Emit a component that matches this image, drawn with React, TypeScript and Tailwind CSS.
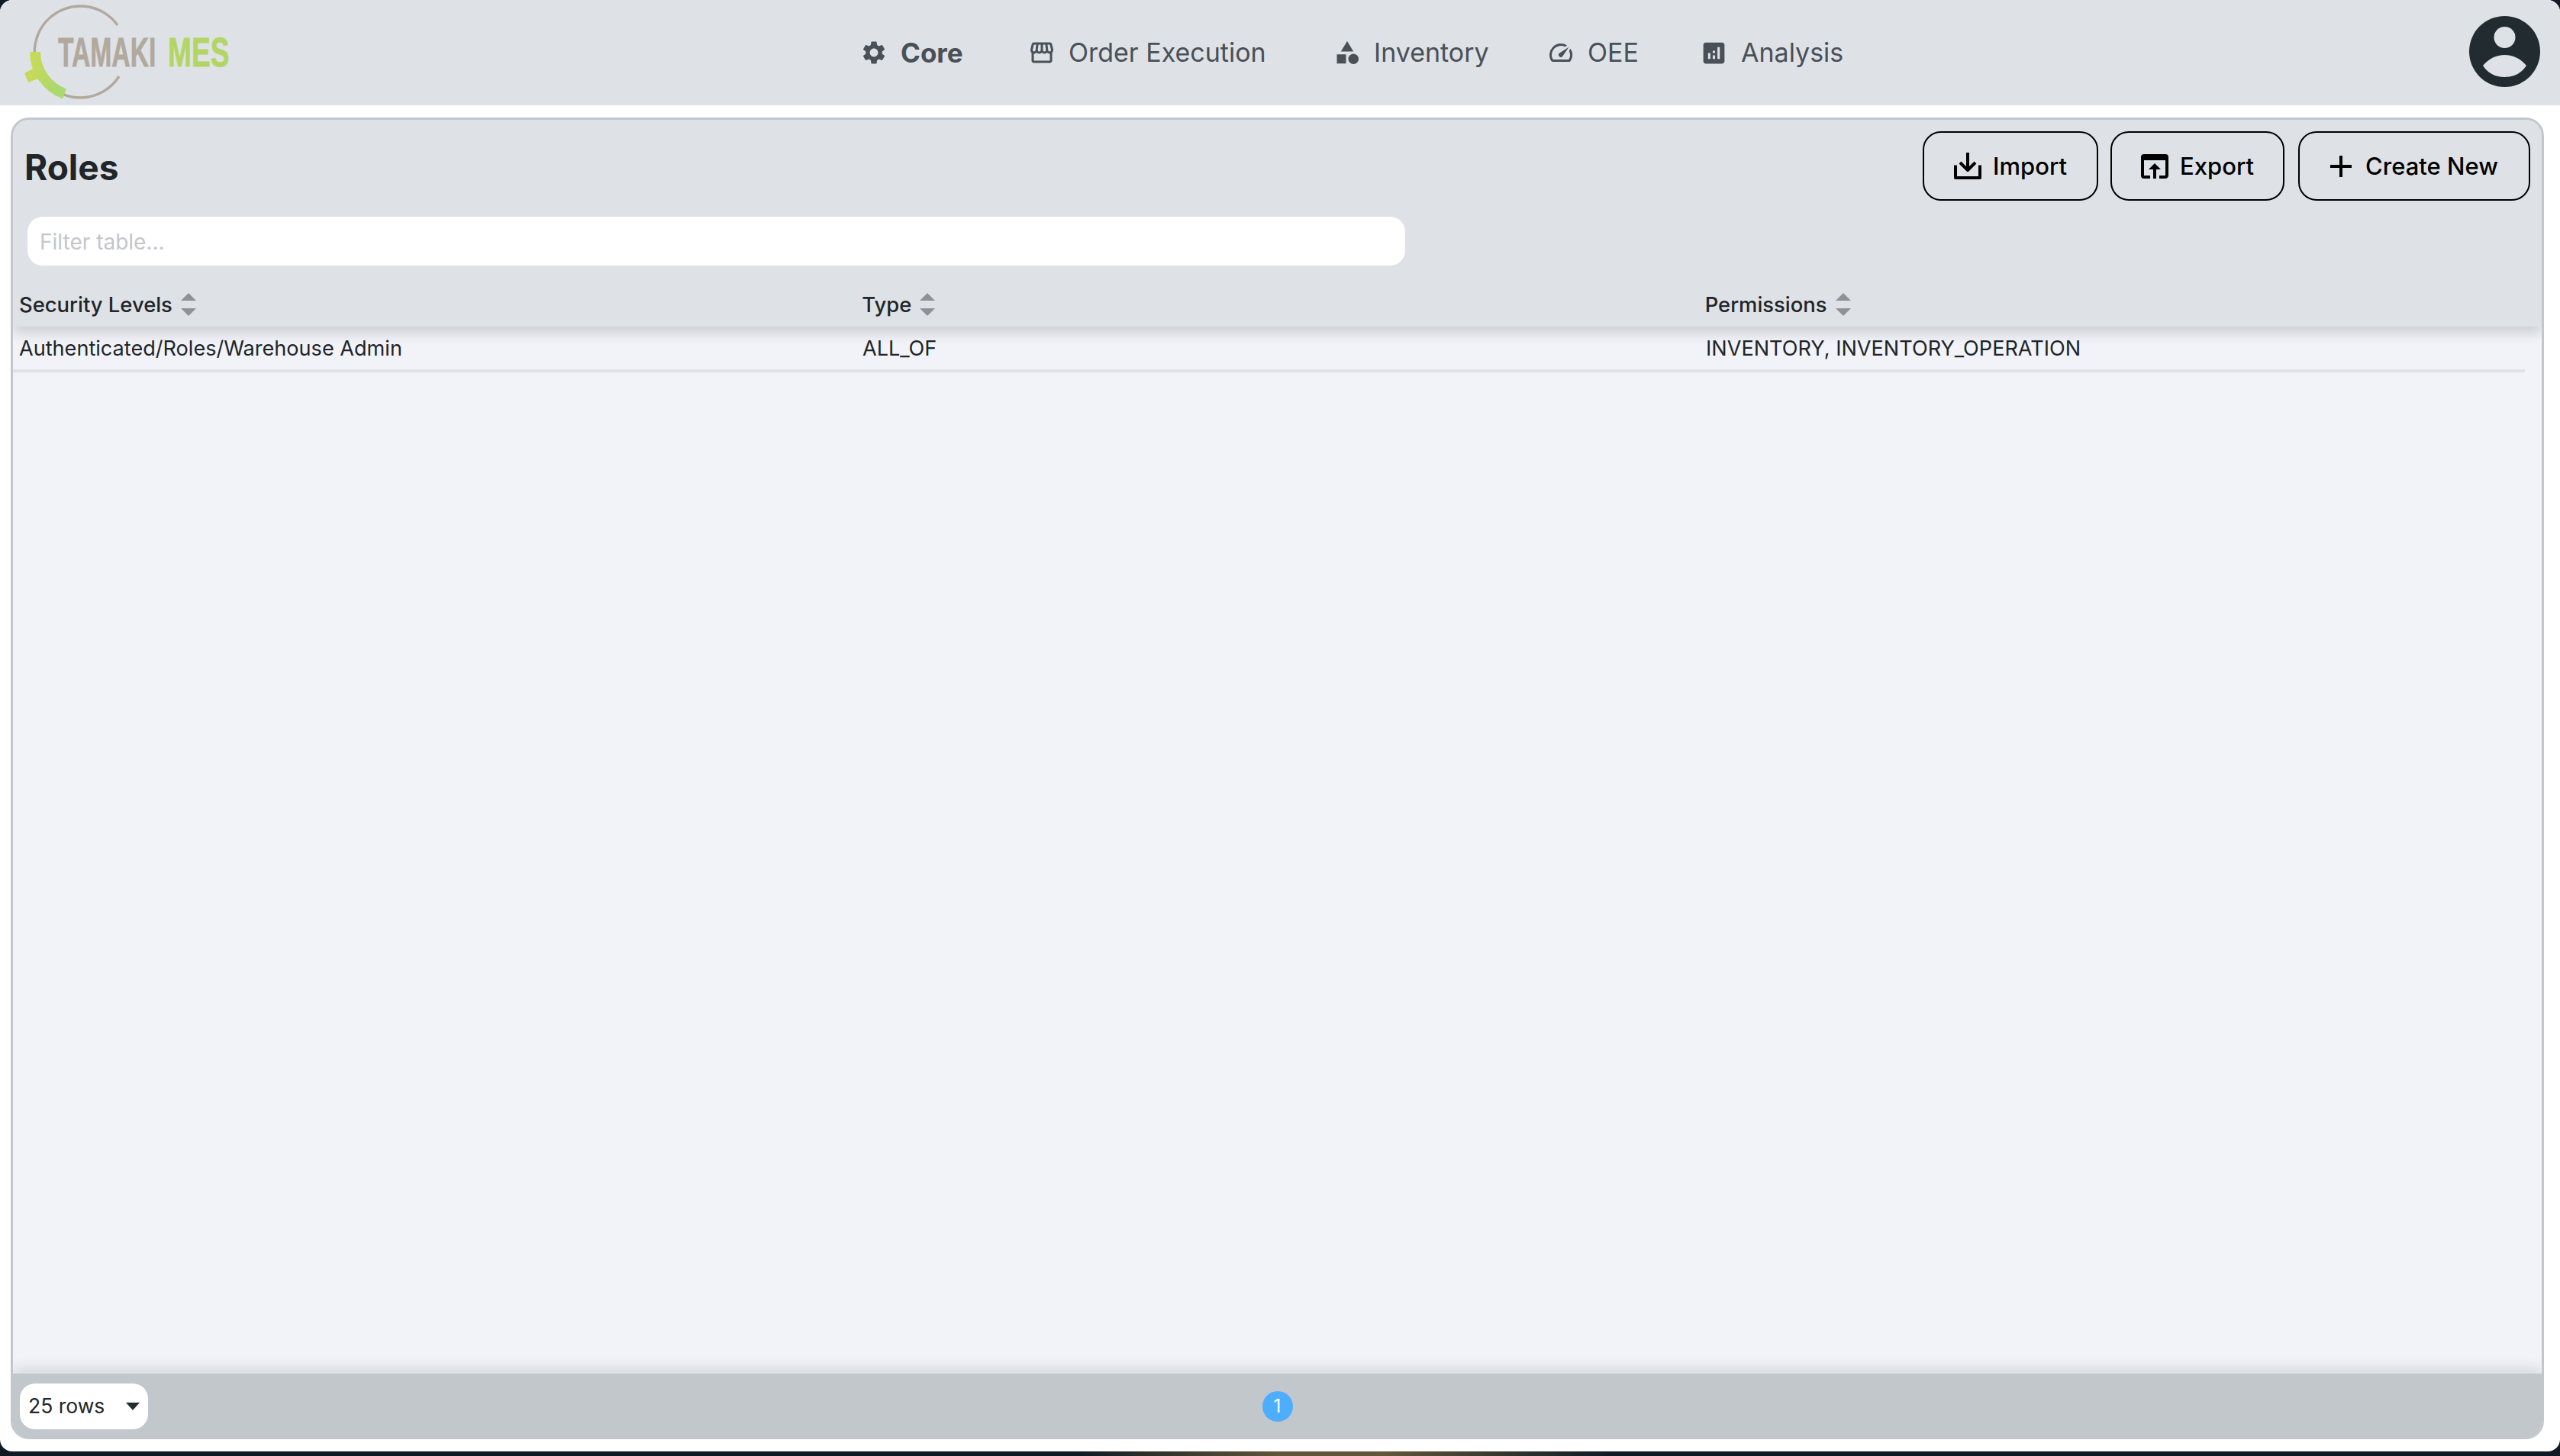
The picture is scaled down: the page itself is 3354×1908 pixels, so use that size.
import { MdSettings, MdOutlineStorefront, MdCategory, MdOutlineSpeed, MdAnalytics, MdOpenInBrowser, MdAdd } from "react-icons/md";

function Logo() {
  return (
    <svg width="320" height="138" viewBox="0 0 320 138" className="block">
      <defs>
        <linearGradient id="lg" x1="0" y1="0" x2="1" y2="0.4">
          <stop offset="0" stopColor="#c6da58" />
          <stop offset="1" stopColor="#a9d96f" />
        </linearGradient>
      </defs>
      <path d="M154 33 A60 60 0 1 0 156 100" fill="none" stroke="#b1a99d" strokeWidth="3.4" />
      <path d="M46 68 A59 59 0 0 0 84.5 123" fill="none" stroke="url(#lg)" strokeWidth="14" />
      <path d="M32 96 L43 90 L50 103 L37 108 Z" fill="#c6da58" />
      <text transform="translate(76 87) scale(0.635 1)" fontFamily="'Liberation Sans', sans-serif" fontWeight="700" fontSize="53" fill="#b1a99d" stroke="#b1a99d" strokeWidth="0.8">TAMAKI</text>
      <text transform="translate(220 87) scale(0.7 1)" fontFamily="'Liberation Sans', sans-serif" fontWeight="700" fontSize="53" fill="#b3d564" stroke="#b3d564" strokeWidth="0.8">MES</text>
    </svg>
  );
}

function Avatar() {
  return (
    <svg width="93" height="93" viewBox="0 0 93 93" className="ml-auto mr-[26px] -mt-[3px] shrink-0">
      <circle cx="46.5" cy="46.5" r="46.5" fill="#212b30" />
      <circle cx="46.5" cy="28" r="14" fill="#dee2e6" />
      <path d="M18 65 Q30 51 46.5 51 Q63 51 75 65 Q65 80 46.5 80 Q28 80 18 65 Z" fill="#dee2e6" />
    </svg>
  );
}

function NavItem({ icon, label, active, className }: { icon: React.ReactNode; label: string; active?: boolean; className: string }) {
  return (
    <div className={`flex shrink-0 items-center gap-[17px] ${className}`}>
      {icon}
      <span className={`leading-none text-[#495057] ${active ? "text-[35px] font-bold" : "text-[34px] font-normal"}`}>{label}</span>
    </div>
  );
}

function SortArrows() {
  return (
    <svg width="20" height="30" viewBox="0 0 20 30" className="ml-[11px] shrink-0">
      <path d="M10 0 L20 10 H0 Z" fill="#8d9299" />
      <path d="M10 30 L20 20 H0 Z" fill="#8d9299" />
    </svg>
  );
}

function ImportIcon() {
  return (
    <svg width="36" height="35" viewBox="0 0 36 35" fill="none" stroke="black" strokeWidth="4" strokeLinejoin="round">
      <path d="M18 0 V23" />
      <path d="M8 13 L18 23 L28 13" />
      <path d="M2 16.5 V33 H34 V16.5" />
    </svg>
  );
}

function Action({ icon, label, className }: { icon: React.ReactNode; label: string; className: string }) {
  return (
    <button className={`flex h-[91px] items-center justify-center rounded-[24px] border-2 border-black text-[31px] font-medium text-black ${className}`}>
      {icon}
      <span className="mt-[2px]">{label}</span>
    </button>
  );
}

function HeaderCell({ label }: { label: string }) {
  return (
    <div className="flex w-[1105px] items-center pl-[8px] text-[27.4px] font-medium text-[#212529]">
      <span className="mt-[1px]">{label}</span>
      <SortArrows />
    </div>
  );
}

export default function App() {
  return (
    <div className="h-[1908px] w-[3354px] overflow-hidden bg-[linear-gradient(to_right,#0f1a24_0%,#0f1a24_42%,#62553a_50%,#62553a_54%,#0f1a24_63%,#0f1a24_100%)] font-['Inter',sans-serif]">
      <div className="flex h-[1902px] flex-col overflow-hidden rounded-[16px] bg-white">
        <header className="flex h-[138px] shrink-0 items-center bg-[#dee2e6]">
          <div className="w-[1127px] shrink-0"><Logo /></div>
          <NavItem className="w-[220px]" active label="Core" icon={<MdSettings size={36} className="shrink-0 text-[#495057]" />} />
          <NavItem className="w-[400px]" label="Order Execution" icon={<MdOutlineStorefront size={36} className="shrink-0 text-[#495057]" />} />
          <NavItem className="w-[280px]" label="Inventory" icon={<MdCategory size={36} className="shrink-0 text-[#495057]" />} />
          <NavItem className="w-[200px]" label="OEE" icon={<MdOutlineSpeed size={36} className="shrink-0 text-[#495057]" />} />
          <NavItem className="w-[300px]" label="Analysis" icon={<MdAnalytics size={37} className="shrink-0 text-[#495057]" />} />
          <Avatar />
        </header>
        <main className="mx-[14px] mt-[16px] flex h-[1732px] w-[3319px] flex-col overflow-hidden rounded-[24px] border-x-[3px] border-t-[3px] border-[#c1c7cb] bg-[#f1f3f8]">
          <div className="relative z-10 h-[271px] shrink-0 bg-[#dee2e6] shadow-[0_8px_16px_rgba(0,0,0,0.16)]">
            <div className="mb-[6px] flex h-[121px] items-center pl-[15px] pr-[15px]">
              <h1 className="mt-[3px] text-[46px] font-bold text-[#212529]">Roles</h1>
              <div className="ml-auto flex gap-[16px]">
                <Action className="w-[230px] gap-[15px]" label="Import" icon={<ImportIcon />} />
                <Action className="w-[228px] gap-[15px]" label="Export" icon={<MdOpenInBrowser size={48} className="-mx-[6px]" />} />
                <Action className="ml-[2px] w-[304px] gap-[18px]" label="Create New" icon={<MdAdd size={48} className="-mx-[10px]" />} />
              </div>
            </div>
            <div className="ml-[19px] flex h-[64px] w-[1805px] items-center rounded-[20px] bg-white pl-[16px] pt-[1px] text-[28px] text-[#c3c6cc]">Filter table...</div>
            <div className="mt-[36px] flex h-[30px]">
              <HeaderCell label="Security Levels" />
              <HeaderCell label="Type" />
              <HeaderCell label="Permissions" />
            </div>
          </div>
          <div className="flex h-[60px] w-[3291px] shrink-0 items-center border-b-[4px] border-[#dee2e6] pt-[2px] text-[27.1px] text-[#212529]">
            <div className="w-[1105px] pl-[8px]">Authenticated/Roles/Warehouse Admin</div>
            <div className="w-[1105px] pl-[8px]">ALL_OF</div>
            <div className="pl-[8px]">INVENTORY, INVENTORY_OPERATION</div>
          </div>
          <div className="flex-1" />
          <footer className="grid h-[86px] shrink-0 grid-cols-[1fr_auto_1fr] items-center bg-[#c1c7cb] px-[9px] shadow-[0_-8px_16px_rgba(0,0,0,0.1)]">
            <div className="flex h-[60px] w-[168px] items-center justify-between rounded-[20px] bg-white pl-[11px] pr-[11px] text-[26.5px] text-[#212529]">
              25 rows
              <svg width="18" height="10" viewBox="0 0 18 10"><path d="M0 0 H18 L9 10 Z" fill="#212b30" /></svg>
            </div>
            <div className="flex h-[40px] w-[40px] items-center justify-center rounded-full bg-[#4daeff] text-[24px] text-white">1</div>
            <div />
          </footer>
        </main>
      </div>
    </div>
  );
}
